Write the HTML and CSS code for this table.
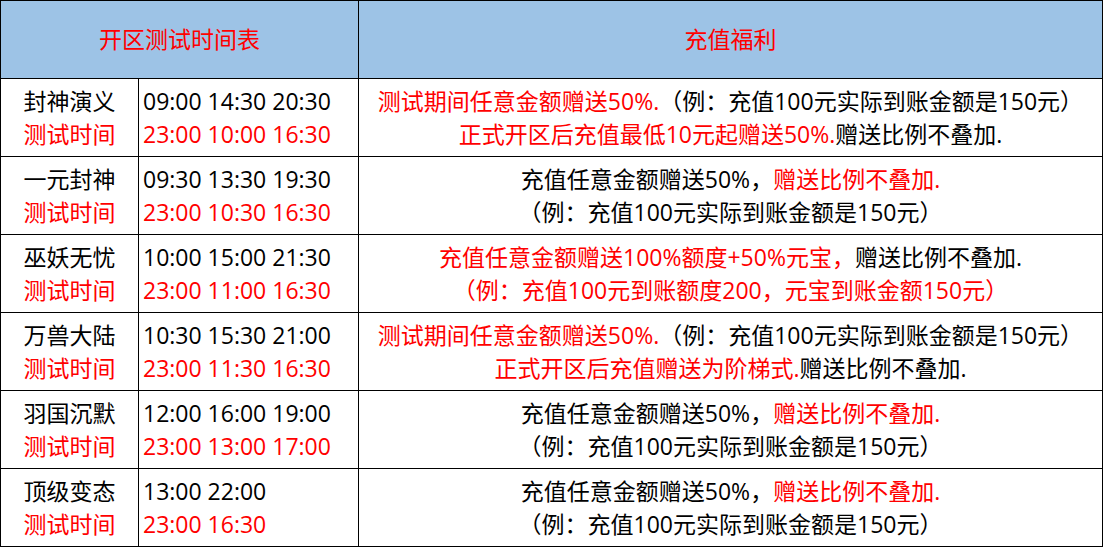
FILE: index.html
```html
<!DOCTYPE html>
<html lang="zh-CN">
<head>
<meta charset="utf-8">
<title>开区测试时间表</title>
<link rel="stylesheet" href="styles.css">
</head>
<body>
<table class="sheet">
  <colgroup>
    <col class="c-name">
    <col class="c-time">
    <col class="c-bonus">
  </colgroup>
  <thead>
    <tr class="head-row">
      <th colspan="2" class="head">开区测试时间表</th>
      <th class="head">充值福利</th>
    </tr>
  </thead>
  <tbody>
    <tr>
      <td class="name">封神演义<br><span class="red">测试时间</span></td>
      <td class="time">09:00 14:30 20:30<br><span class="red">23:00 10:00 16:30</span></td>
      <td class="bonus"><span class="red">测试期间任意金额赠送50%.</span>（例：充值100元实际到账金额是150元）<br><span class="red">正式开区后充值最低10元起赠送50%.</span>赠送比例不叠加.</td>
    </tr>
    <tr>
      <td class="name">一元封神<br><span class="red">测试时间</span></td>
      <td class="time">09:30 13:30 19:30<br><span class="red">23:00 10:30 16:30</span></td>
      <td class="bonus">充值任意金额赠送50%，<span class="red">赠送比例不叠加.</span><br>（例：充值100元实际到账金额是150元）</td>
    </tr>
    <tr>
      <td class="name">巫妖无忧<br><span class="red">测试时间</span></td>
      <td class="time">10:00 15:00 21:30<br><span class="red">23:00 11:00 16:30</span></td>
      <td class="bonus"><span class="red">充值任意金额赠送100%额度+50%元宝，</span>赠送比例不叠加.<br><span class="red">（例：充值100元到账额度200，元宝到账金额150元）</span></td>
    </tr>
    <tr>
      <td class="name">万兽大陆<br><span class="red">测试时间</span></td>
      <td class="time">10:30 15:30 21:00<br><span class="red">23:00 11:30 16:30</span></td>
      <td class="bonus"><span class="red">测试期间任意金额赠送50%.</span>（例：充值100元实际到账金额是150元）<br><span class="red">正式开区后充值赠送为阶梯式.</span>赠送比例不叠加.</td>
    </tr>
    <tr>
      <td class="name">羽国沉默<br><span class="red">测试时间</span></td>
      <td class="time">12:00 16:00 19:00<br><span class="red">23:00 13:00 17:00</span></td>
      <td class="bonus">充值任意金额赠送50%，<span class="red">赠送比例不叠加.</span><br>（例：充值100元实际到账金额是150元）</td>
    </tr>
    <tr>
      <td class="name">顶级变态<br><span class="red">测试时间</span></td>
      <td class="time">13:00 22:00<br><span class="red">23:00 16:30</span></td>
      <td class="bonus">充值任意金额赠送50%，<span class="red">赠送比例不叠加.</span><br>（例：充值100元实际到账金额是150元）</td>
    </tr>
  </tbody>
</table>
</body>
</html>
```

FILE: styles.css
```css
html, body {
  margin: 0;
  padding: 0;
  background: #ffffff;
}

.sheet {
  border-collapse: collapse;
  table-layout: fixed;
  width: 1102px;
  font-family: "Open Sans", "Noto Sans CJK SC", "Microsoft YaHei", sans-serif;
  font-size: 23px;
  line-height: 33px;
  color: #000000;
}

.c-name { width: 138px; }
.c-time { width: 220px; }
.c-bonus { width: 744px; }

.sheet th,
.sheet td {
  border: 1.5px solid #000000;
  padding: 0;
  vertical-align: middle;
  white-space: nowrap;
}

.head-row th {
  height: 77px;
}

.sheet tbody td {
  height: 77px;
}

.sheet .head {
  background: #9dc3e6;
  color: #ff0000;
  font-weight: normal;
  text-align: center;
}

.sheet .name {
  text-align: center;
}

.sheet .time {
  text-align: left;
  padding-left: 4px;
}

.sheet .bonus {
  text-align: center;
}

.red {
  color: #ff0000;
}
```
